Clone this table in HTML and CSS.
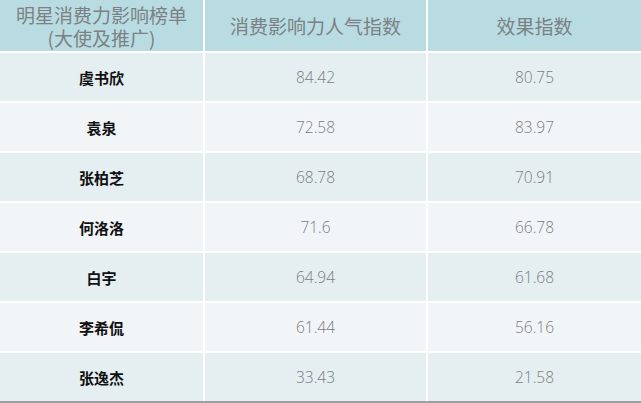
FILE: index.html
```html
<!DOCTYPE html>
<html lang="zh-CN">
<head>
<meta charset="utf-8">
<link rel="stylesheet" href="styles.css">
</head>
<body>
<div class="board">
  <div class="cell head"><span>明星消费力影响榜单</span><span>(大使及推广)</span></div>
  <div class="cell head">消费影响力人气指数</div>
  <div class="cell head">效果指数</div>

  <div class="cell name odd">虞书欣</div><div class="cell num odd">84.42</div><div class="cell num odd">80.75</div>
  <div class="cell name even">袁泉</div><div class="cell num even">72.58</div><div class="cell num even">83.97</div>
  <div class="cell name odd">张柏芝</div><div class="cell num odd">68.78</div><div class="cell num odd">70.91</div>
  <div class="cell name even">何洛洛</div><div class="cell num even">71.6</div><div class="cell num even">66.78</div>
  <div class="cell name odd">白宇</div><div class="cell num odd">64.94</div><div class="cell num odd">61.68</div>
  <div class="cell name even">李希侃</div><div class="cell num even">61.44</div><div class="cell num even">56.16</div>
  <div class="cell name odd">张逸杰</div><div class="cell num odd">33.43</div><div class="cell num odd">21.58</div>
</div>
</body>
</html>
```
FILE: styles.css
```css
html, body {
  margin: 0;
  padding: 0;
  background: #ffffff;
}
.board {
  width: 641px;
  display: grid;
  grid-template-columns: 203px 221px 213px;
  grid-template-rows: 51px repeat(7, 48px);
  gap: 2px;
  background: #ffffff;
  border-bottom: 2px solid #9a9fa3;
  font-family: "Noto Sans CJK SC", "Noto Sans", sans-serif;
}
.cell {
  display: flex;
  flex-direction: column;
  align-items: center;
  justify-content: center;
}
.head {
  background: #b8dce1;
  color: #7b8184;
  font-size: 19px;
  line-height: 23px;
}
.name {
  color: #111111;
  font-weight: bold;
  font-size: 15px;
}
.num {
  color: #7a7d80;
  font-family: "Open Sans", "Noto Sans", sans-serif;
  font-weight: 300;
  font-size: 15.5px;
}
.odd { background: #e5eef1; }
.even { background: #f2f5f8; }
```
